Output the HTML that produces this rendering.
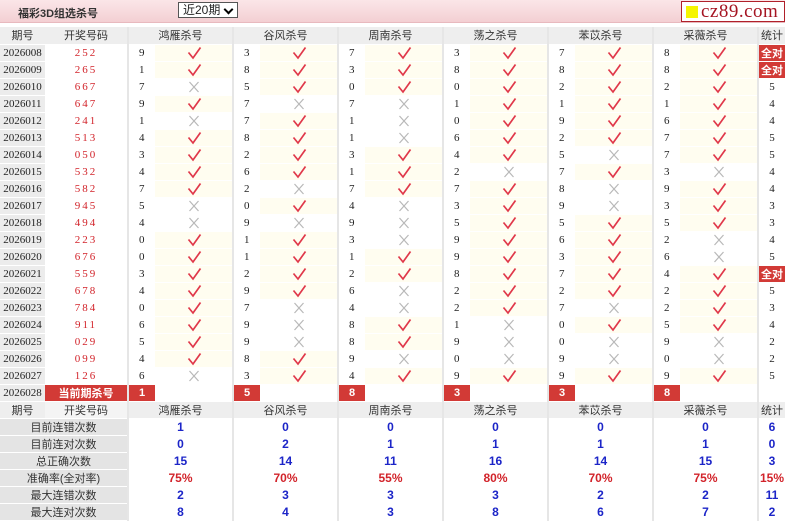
<!DOCTYPE html>
<html><head><meta charset="utf-8"><style>
*{margin:0;padding:0;box-sizing:border-box}
body{width:785px;height:522px;overflow:hidden;background:#fff;font-family:"Liberation Sans","Noto Sans CJK SC",sans-serif;font-size:11px;color:#222;position:relative}
.top{position:absolute;left:0;top:0;width:785px;height:23px;background:linear-gradient(180deg,#fbe6e8,#f3cfd3);border-bottom:1px solid #e8b9be}
.title{position:absolute;left:18px;top:5px;font-size:11px;font-weight:bold;color:#333}
.sel{position:absolute;left:178px;top:2px;width:60px;height:16px;border:1px solid #555;background:#fff;font-size:12px;padding-left:4px;line-height:14px}
.sel:after{content:"";position:absolute;right:5px;top:3px;width:5px;height:5px;border-right:2px solid #000;border-bottom:2px solid #000;transform:rotate(45deg)}
.logo{position:absolute;left:681px;top:1px;width:104px;height:21px;border:1px solid #b0202a;background:#fff}
.logo i{position:absolute;left:4px;top:4px;width:12px;height:12px;background:#f5f500}
.logo b{position:absolute;left:19px;top:-1px;font-family:"Liberation Serif",serif;font-weight:normal;font-size:19px;color:#a51422;letter-spacing:.5px}
table{position:absolute;left:0;top:27px;border-collapse:collapse;table-layout:fixed;width:785px}
td{height:17px;padding:0;text-align:center;border-bottom:1px solid #fff;white-space:nowrap;overflow:hidden;font-family:"Liberation Serif","Noto Sans CJK SC",serif;font-size:11px}
tr.h td{background:#eee;font-family:"Liberation Sans","Noto Sans CJK SC",sans-serif;color:#333}
td.p{background:#ececec;font-size:11px}
td.k{color:#d2232a;letter-spacing:2px}
td.n{border-left:2px solid #e6e6e6;text-align:left;padding-left:10px}
td.y{background:#fffdf0}
td.s{border-left:2px solid #e6e6e6}
td.q{background:#d23a36;color:#fff;font-weight:bold;font-family:"Liberation Sans","Noto Sans CJK SC",sans-serif}
td.r{background:#d23a36;color:#fff;font-weight:bold;font-family:"Liberation Sans","Noto Sans CJK SC",sans-serif;border-left:2px solid #e6e6e6}
td.l{background:#e4e4e4;font-family:"Liberation Sans","Noto Sans CJK SC",sans-serif;color:#333}
td.v{color:#1c25c8;font-weight:bold;font-family:"Liberation Sans",sans-serif;font-size:12px;border-left:2px solid #e6e6e6}
td.e{color:#d2232a;font-weight:bold;font-family:"Liberation Sans",sans-serif;font-size:12px;border-left:2px solid #e6e6e6}
svg.c,svg.x{display:block;margin:0 auto;width:16px;height:14px}
</style></head><body>
<svg width="0" height="0" style="position:absolute"><defs>
<symbol id="c" viewBox="0 0 16 14"><path d="M2.5 6.5 L7 12 L14.5 1.5" fill="none" stroke="#e0384a" stroke-width="1.7"/></symbol>
<symbol id="x" viewBox="0 0 16 14"><path d="M3.5 2 L12.5 12 M12.5 2 L3.5 12" fill="none" stroke="#b8b8b8" stroke-width="1.2"/></symbol>
</defs></svg>
<div class="top"><div class="title">福彩3D组选杀号</div><div class="sel">近20期</div><div class="logo"><i></i><b>cz89.com</b></div></div>
<table>
<colgroup><col style="width:45px"><col style="width:83px"><col style="width:27px"><col style="width:78px"><col style="width:27px"><col style="width:78px"><col style="width:27px"><col style="width:78px"><col style="width:27px"><col style="width:78px"><col style="width:27px"><col style="width:78px"><col style="width:27px"><col style="width:78px"><col style="width:27px"></colgroup>
<tr class="h"><td>期号</td><td>开奖号码</td><td colspan="2" class="s">鸿雁杀号</td><td colspan="2" class="s">谷风杀号</td><td colspan="2" class="s">周南杀号</td><td colspan="2" class="s">荡之杀号</td><td colspan="2" class="s">苯苡杀号</td><td colspan="2" class="s">采薇杀号</td><td class="s">统计</td></tr>
<tr><td class="p">2026008</td><td class="k">252</td><td class="n">9</td><td class="y"><svg class="c"><use href="#c"/></svg></td><td class="n">3</td><td class="y"><svg class="c"><use href="#c"/></svg></td><td class="n">7</td><td class="y"><svg class="c"><use href="#c"/></svg></td><td class="n">3</td><td class="y"><svg class="c"><use href="#c"/></svg></td><td class="n">7</td><td class="y"><svg class="c"><use href="#c"/></svg></td><td class="n">8</td><td class="y"><svg class="c"><use href="#c"/></svg></td><td class="r">全对</td></tr>
<tr><td class="p">2026009</td><td class="k">265</td><td class="n">1</td><td class="y"><svg class="c"><use href="#c"/></svg></td><td class="n">8</td><td class="y"><svg class="c"><use href="#c"/></svg></td><td class="n">3</td><td class="y"><svg class="c"><use href="#c"/></svg></td><td class="n">8</td><td class="y"><svg class="c"><use href="#c"/></svg></td><td class="n">8</td><td class="y"><svg class="c"><use href="#c"/></svg></td><td class="n">8</td><td class="y"><svg class="c"><use href="#c"/></svg></td><td class="r">全对</td></tr>
<tr><td class="p">2026010</td><td class="k">667</td><td class="n">7</td><td><svg class="x"><use href="#x"/></svg></td><td class="n">5</td><td class="y"><svg class="c"><use href="#c"/></svg></td><td class="n">0</td><td class="y"><svg class="c"><use href="#c"/></svg></td><td class="n">0</td><td class="y"><svg class="c"><use href="#c"/></svg></td><td class="n">2</td><td class="y"><svg class="c"><use href="#c"/></svg></td><td class="n">2</td><td class="y"><svg class="c"><use href="#c"/></svg></td><td class="s">5</td></tr>
<tr><td class="p">2026011</td><td class="k">647</td><td class="n">9</td><td class="y"><svg class="c"><use href="#c"/></svg></td><td class="n">7</td><td><svg class="x"><use href="#x"/></svg></td><td class="n">7</td><td><svg class="x"><use href="#x"/></svg></td><td class="n">1</td><td class="y"><svg class="c"><use href="#c"/></svg></td><td class="n">1</td><td class="y"><svg class="c"><use href="#c"/></svg></td><td class="n">1</td><td class="y"><svg class="c"><use href="#c"/></svg></td><td class="s">4</td></tr>
<tr><td class="p">2026012</td><td class="k">241</td><td class="n">1</td><td><svg class="x"><use href="#x"/></svg></td><td class="n">7</td><td class="y"><svg class="c"><use href="#c"/></svg></td><td class="n">1</td><td><svg class="x"><use href="#x"/></svg></td><td class="n">0</td><td class="y"><svg class="c"><use href="#c"/></svg></td><td class="n">9</td><td class="y"><svg class="c"><use href="#c"/></svg></td><td class="n">6</td><td class="y"><svg class="c"><use href="#c"/></svg></td><td class="s">4</td></tr>
<tr><td class="p">2026013</td><td class="k">513</td><td class="n">4</td><td class="y"><svg class="c"><use href="#c"/></svg></td><td class="n">8</td><td class="y"><svg class="c"><use href="#c"/></svg></td><td class="n">1</td><td><svg class="x"><use href="#x"/></svg></td><td class="n">6</td><td class="y"><svg class="c"><use href="#c"/></svg></td><td class="n">2</td><td class="y"><svg class="c"><use href="#c"/></svg></td><td class="n">7</td><td class="y"><svg class="c"><use href="#c"/></svg></td><td class="s">5</td></tr>
<tr><td class="p">2026014</td><td class="k">050</td><td class="n">3</td><td class="y"><svg class="c"><use href="#c"/></svg></td><td class="n">2</td><td class="y"><svg class="c"><use href="#c"/></svg></td><td class="n">3</td><td class="y"><svg class="c"><use href="#c"/></svg></td><td class="n">4</td><td class="y"><svg class="c"><use href="#c"/></svg></td><td class="n">5</td><td><svg class="x"><use href="#x"/></svg></td><td class="n">7</td><td class="y"><svg class="c"><use href="#c"/></svg></td><td class="s">5</td></tr>
<tr><td class="p">2026015</td><td class="k">532</td><td class="n">4</td><td class="y"><svg class="c"><use href="#c"/></svg></td><td class="n">6</td><td class="y"><svg class="c"><use href="#c"/></svg></td><td class="n">1</td><td class="y"><svg class="c"><use href="#c"/></svg></td><td class="n">2</td><td><svg class="x"><use href="#x"/></svg></td><td class="n">7</td><td class="y"><svg class="c"><use href="#c"/></svg></td><td class="n">3</td><td><svg class="x"><use href="#x"/></svg></td><td class="s">4</td></tr>
<tr><td class="p">2026016</td><td class="k">582</td><td class="n">7</td><td class="y"><svg class="c"><use href="#c"/></svg></td><td class="n">2</td><td><svg class="x"><use href="#x"/></svg></td><td class="n">7</td><td class="y"><svg class="c"><use href="#c"/></svg></td><td class="n">7</td><td class="y"><svg class="c"><use href="#c"/></svg></td><td class="n">8</td><td><svg class="x"><use href="#x"/></svg></td><td class="n">9</td><td class="y"><svg class="c"><use href="#c"/></svg></td><td class="s">4</td></tr>
<tr><td class="p">2026017</td><td class="k">945</td><td class="n">5</td><td><svg class="x"><use href="#x"/></svg></td><td class="n">0</td><td class="y"><svg class="c"><use href="#c"/></svg></td><td class="n">4</td><td><svg class="x"><use href="#x"/></svg></td><td class="n">3</td><td class="y"><svg class="c"><use href="#c"/></svg></td><td class="n">9</td><td><svg class="x"><use href="#x"/></svg></td><td class="n">3</td><td class="y"><svg class="c"><use href="#c"/></svg></td><td class="s">3</td></tr>
<tr><td class="p">2026018</td><td class="k">494</td><td class="n">4</td><td><svg class="x"><use href="#x"/></svg></td><td class="n">9</td><td><svg class="x"><use href="#x"/></svg></td><td class="n">9</td><td><svg class="x"><use href="#x"/></svg></td><td class="n">5</td><td class="y"><svg class="c"><use href="#c"/></svg></td><td class="n">5</td><td class="y"><svg class="c"><use href="#c"/></svg></td><td class="n">5</td><td class="y"><svg class="c"><use href="#c"/></svg></td><td class="s">3</td></tr>
<tr><td class="p">2026019</td><td class="k">223</td><td class="n">0</td><td class="y"><svg class="c"><use href="#c"/></svg></td><td class="n">1</td><td class="y"><svg class="c"><use href="#c"/></svg></td><td class="n">3</td><td><svg class="x"><use href="#x"/></svg></td><td class="n">9</td><td class="y"><svg class="c"><use href="#c"/></svg></td><td class="n">6</td><td class="y"><svg class="c"><use href="#c"/></svg></td><td class="n">2</td><td><svg class="x"><use href="#x"/></svg></td><td class="s">4</td></tr>
<tr><td class="p">2026020</td><td class="k">676</td><td class="n">0</td><td class="y"><svg class="c"><use href="#c"/></svg></td><td class="n">1</td><td class="y"><svg class="c"><use href="#c"/></svg></td><td class="n">1</td><td class="y"><svg class="c"><use href="#c"/></svg></td><td class="n">9</td><td class="y"><svg class="c"><use href="#c"/></svg></td><td class="n">3</td><td class="y"><svg class="c"><use href="#c"/></svg></td><td class="n">6</td><td><svg class="x"><use href="#x"/></svg></td><td class="s">5</td></tr>
<tr><td class="p">2026021</td><td class="k">559</td><td class="n">3</td><td class="y"><svg class="c"><use href="#c"/></svg></td><td class="n">2</td><td class="y"><svg class="c"><use href="#c"/></svg></td><td class="n">2</td><td class="y"><svg class="c"><use href="#c"/></svg></td><td class="n">8</td><td class="y"><svg class="c"><use href="#c"/></svg></td><td class="n">7</td><td class="y"><svg class="c"><use href="#c"/></svg></td><td class="n">4</td><td class="y"><svg class="c"><use href="#c"/></svg></td><td class="r">全对</td></tr>
<tr><td class="p">2026022</td><td class="k">678</td><td class="n">4</td><td class="y"><svg class="c"><use href="#c"/></svg></td><td class="n">9</td><td class="y"><svg class="c"><use href="#c"/></svg></td><td class="n">6</td><td><svg class="x"><use href="#x"/></svg></td><td class="n">2</td><td class="y"><svg class="c"><use href="#c"/></svg></td><td class="n">2</td><td class="y"><svg class="c"><use href="#c"/></svg></td><td class="n">2</td><td class="y"><svg class="c"><use href="#c"/></svg></td><td class="s">5</td></tr>
<tr><td class="p">2026023</td><td class="k">784</td><td class="n">0</td><td class="y"><svg class="c"><use href="#c"/></svg></td><td class="n">7</td><td><svg class="x"><use href="#x"/></svg></td><td class="n">4</td><td><svg class="x"><use href="#x"/></svg></td><td class="n">2</td><td class="y"><svg class="c"><use href="#c"/></svg></td><td class="n">7</td><td><svg class="x"><use href="#x"/></svg></td><td class="n">2</td><td class="y"><svg class="c"><use href="#c"/></svg></td><td class="s">3</td></tr>
<tr><td class="p">2026024</td><td class="k">911</td><td class="n">6</td><td class="y"><svg class="c"><use href="#c"/></svg></td><td class="n">9</td><td><svg class="x"><use href="#x"/></svg></td><td class="n">8</td><td class="y"><svg class="c"><use href="#c"/></svg></td><td class="n">1</td><td><svg class="x"><use href="#x"/></svg></td><td class="n">0</td><td class="y"><svg class="c"><use href="#c"/></svg></td><td class="n">5</td><td class="y"><svg class="c"><use href="#c"/></svg></td><td class="s">4</td></tr>
<tr><td class="p">2026025</td><td class="k">029</td><td class="n">5</td><td class="y"><svg class="c"><use href="#c"/></svg></td><td class="n">9</td><td><svg class="x"><use href="#x"/></svg></td><td class="n">8</td><td class="y"><svg class="c"><use href="#c"/></svg></td><td class="n">9</td><td><svg class="x"><use href="#x"/></svg></td><td class="n">0</td><td><svg class="x"><use href="#x"/></svg></td><td class="n">9</td><td><svg class="x"><use href="#x"/></svg></td><td class="s">2</td></tr>
<tr><td class="p">2026026</td><td class="k">099</td><td class="n">4</td><td class="y"><svg class="c"><use href="#c"/></svg></td><td class="n">8</td><td class="y"><svg class="c"><use href="#c"/></svg></td><td class="n">9</td><td><svg class="x"><use href="#x"/></svg></td><td class="n">0</td><td><svg class="x"><use href="#x"/></svg></td><td class="n">9</td><td><svg class="x"><use href="#x"/></svg></td><td class="n">0</td><td><svg class="x"><use href="#x"/></svg></td><td class="s">2</td></tr>
<tr><td class="p">2026027</td><td class="k">126</td><td class="n">6</td><td><svg class="x"><use href="#x"/></svg></td><td class="n">3</td><td class="y"><svg class="c"><use href="#c"/></svg></td><td class="n">4</td><td class="y"><svg class="c"><use href="#c"/></svg></td><td class="n">9</td><td class="y"><svg class="c"><use href="#c"/></svg></td><td class="n">9</td><td class="y"><svg class="c"><use href="#c"/></svg></td><td class="n">9</td><td class="y"><svg class="c"><use href="#c"/></svg></td><td class="s">5</td></tr>
<tr><td class="p">2026028</td><td class="q">当前期杀号</td><td class="r" style="text-align:left;padding-left:10px">1</td><td></td><td class="r" style="text-align:left;padding-left:10px">5</td><td></td><td class="r" style="text-align:left;padding-left:10px">8</td><td></td><td class="r" style="text-align:left;padding-left:10px">3</td><td></td><td class="r" style="text-align:left;padding-left:10px">3</td><td></td><td class="r" style="text-align:left;padding-left:10px">8</td><td></td><td class="s"></td></tr>
<tr class="h"><td>期号</td><td style="background:#f4f4f4">开奖号码</td><td colspan="2" class="s">鸿雁杀号</td><td colspan="2" class="s">谷风杀号</td><td colspan="2" class="s">周南杀号</td><td colspan="2" class="s">荡之杀号</td><td colspan="2" class="s">苯苡杀号</td><td colspan="2" class="s">采薇杀号</td><td class="s">统计</td></tr>
<tr><td colspan="2" class="l">目前连错次数</td><td colspan="2" class="v">1</td><td colspan="2" class="v">0</td><td colspan="2" class="v">0</td><td colspan="2" class="v">0</td><td colspan="2" class="v">0</td><td colspan="2" class="v">0</td><td class="v">6</td></tr>
<tr><td colspan="2" class="l">目前连对次数</td><td colspan="2" class="v">0</td><td colspan="2" class="v">2</td><td colspan="2" class="v">1</td><td colspan="2" class="v">1</td><td colspan="2" class="v">1</td><td colspan="2" class="v">1</td><td class="v">0</td></tr>
<tr><td colspan="2" class="l">总正确次数</td><td colspan="2" class="v">15</td><td colspan="2" class="v">14</td><td colspan="2" class="v">11</td><td colspan="2" class="v">16</td><td colspan="2" class="v">14</td><td colspan="2" class="v">15</td><td class="v">3</td></tr>
<tr><td colspan="2" class="l">准确率(全对率)</td><td colspan="2" class="e">75%</td><td colspan="2" class="e">70%</td><td colspan="2" class="e">55%</td><td colspan="2" class="e">80%</td><td colspan="2" class="e">70%</td><td colspan="2" class="e">75%</td><td class="e">15%</td></tr>
<tr><td colspan="2" class="l">最大连错次数</td><td colspan="2" class="v">2</td><td colspan="2" class="v">3</td><td colspan="2" class="v">3</td><td colspan="2" class="v">3</td><td colspan="2" class="v">2</td><td colspan="2" class="v">2</td><td class="v">11</td></tr>
<tr><td colspan="2" class="l">最大连对次数</td><td colspan="2" class="v">8</td><td colspan="2" class="v">4</td><td colspan="2" class="v">3</td><td colspan="2" class="v">8</td><td colspan="2" class="v">6</td><td colspan="2" class="v">7</td><td class="v">2</td></tr>
</table>
</body></html>
